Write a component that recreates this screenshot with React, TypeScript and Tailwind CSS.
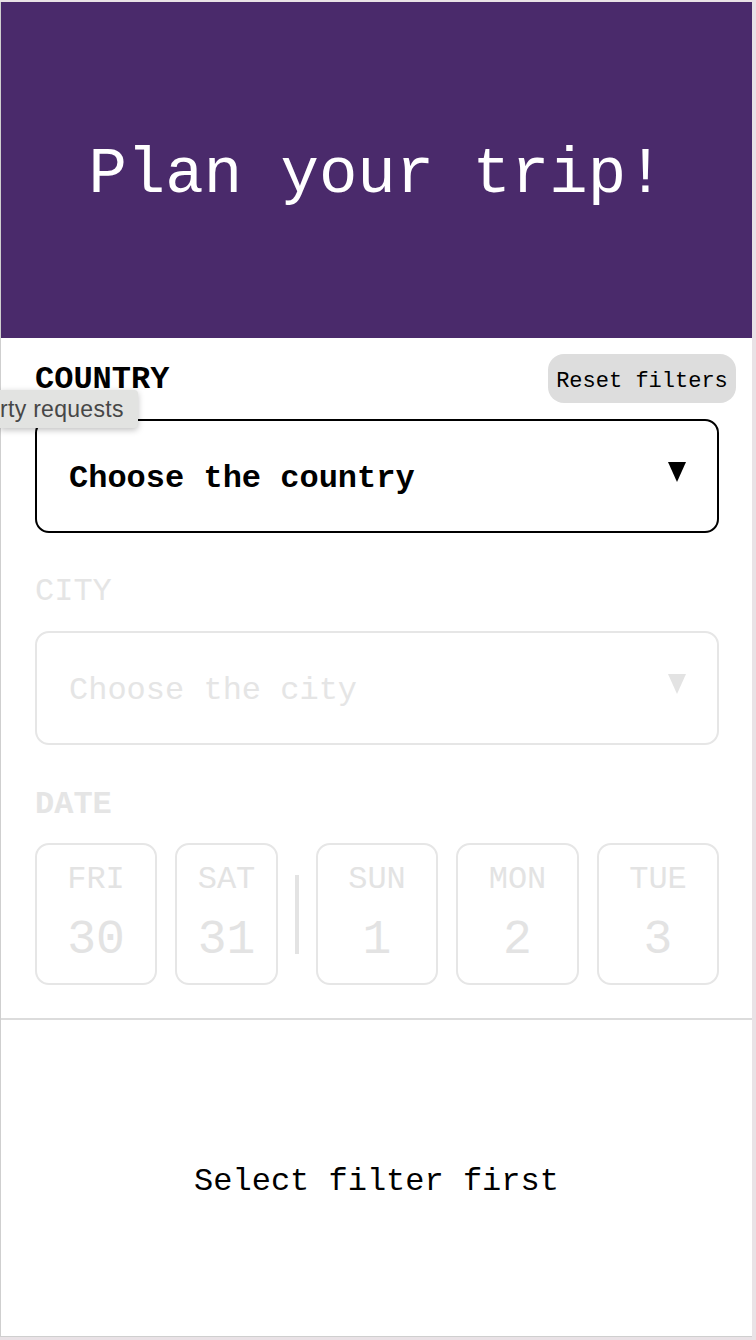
import React from "react";

const mono = { fontFamily: '"Liberation Mono", "DejaVu Sans Mono", monospace' };

function Arrow({ color }: { color: string }) {
  return (
    <svg width="18" height="20" viewBox="0 0 18 20" className="block">
      <polygon points="0,0 18,0 9,20" fill={color} />
    </svg>
  );
}

const days = [
  { d: "FRI", n: "30", w: "w-[122px]" },
  { d: "SAT", n: "31", w: "w-[103px]" },
];
const days2 = [
  { d: "SUN", n: "1", w: "w-[122px]" },
  { d: "MON", n: "2", w: "w-[123px]" },
  { d: "TUE", n: "3", w: "w-[122px]" },
];

function DayCard({ d, n, w }: { d: string; n: string; w: string }) {
  return (
    <div
      className={`${w} h-[142px] shrink-0 rounded-[14px] border-2 border-[#e6e6e6] flex flex-col items-center pt-[15px] text-[#e3e3e3]`}
    >
      <div className="h-[40px] flex items-center text-[32px] leading-none">{d}</div>
      <div className="mt-[12px] h-[56px] flex items-center text-[48px] leading-none">{n}</div>
    </div>
  );
}

export default function App() {
  return (
    <div className="relative w-[756px] h-[1340px] bg-[#e9e2e6] overflow-hidden" style={mono}>
      <div className="mt-[2px] w-[752px] h-[1335px] bg-white border-l border-b border-[#cfcfcf] flex flex-col">
        <header className="h-[336px] bg-[#4a2a6b] flex items-center justify-center">
          <h1 className="text-white text-[64px] leading-none font-normal translate-y-[5px]">Plan your trip!</h1>
        </header>

        <div className="mt-[16px] h-[49px] pl-[34px] pr-[16px] flex items-center justify-between">
          <span className="text-[32px] font-bold leading-none text-black translate-y-[1px]">COUNTRY</span>
          <button className="h-[49px] w-[188px] rounded-[16px] bg-[#dddddd] text-[22px] text-black leading-none">
            <span className="inline-block translate-y-[3px]">Reset filters</span>
          </button>
        </div>

        <div className="mt-[16px] ml-[34px] w-[684px] h-[114px] border-2 border-black rounded-[14px] relative flex items-center pl-[32px]">
          <span className="text-[32px] font-bold text-black leading-none translate-y-[3px]">Choose the country</span>
          <div className="absolute right-[31px] top-[41px]">
            <Arrow color="#000000" />
          </div>
        </div>

        <div className="mt-[39px] ml-[34px] h-[40px] flex items-center text-[32px] leading-none text-[#e5e5e5]">
          CITY
        </div>

        <div className="mt-[19px] ml-[34px] w-[684px] h-[114px] border-2 border-[#e6e6e6] rounded-[14px] relative flex items-center pl-[32px]">
          <span className="text-[32px] text-[#e5e5e5] leading-none translate-y-[3px]">Choose the city</span>
          <div className="absolute right-[31px] top-[41px]">
            <Arrow color="#e3e3e3" />
          </div>
        </div>

        <div className="mt-[40px] ml-[34px] h-[40px] flex items-center text-[32px] font-bold leading-none text-[#e5e5e5]">
          DATE
        </div>

        <div className="mt-[18px] ml-[34px] flex items-center">
          <DayCard {...days[0]} />
          <div className="w-[18px]" />
          <DayCard {...days[1]} />
          <div className="mx-[17px] w-[4px] h-[79px] bg-[#e3e3e3]" />
          <DayCard {...days2[0]} />
          <div className="w-[18px]" />
          <DayCard {...days2[1]} />
          <div className="w-[18px]" />
          <DayCard {...days2[2]} />
        </div>

        <div className="mt-[33px] h-[2px] bg-[#dcdcdc]" />

        <div className="flex-1 flex items-center justify-center">
          <span className="text-[32px] text-black leading-none translate-y-[4px]">Select filter first</span>
        </div>
      </div>

      <div
        className="absolute left-0 top-[390px] w-[138px] h-[38px] bg-[#e2e3e1] rounded-br-[4px] rounded-tr-[4px] shadow-[0_2px_6px_rgba(0,0,0,0.25)] flex items-center whitespace-nowrap text-[#474747] text-[23px] tracking-[0.3px]"
        style={{ fontFamily: '"Liberation Sans", Arial, sans-serif' }}
      >
        rty requests
      </div>
    </div>
  );
}
